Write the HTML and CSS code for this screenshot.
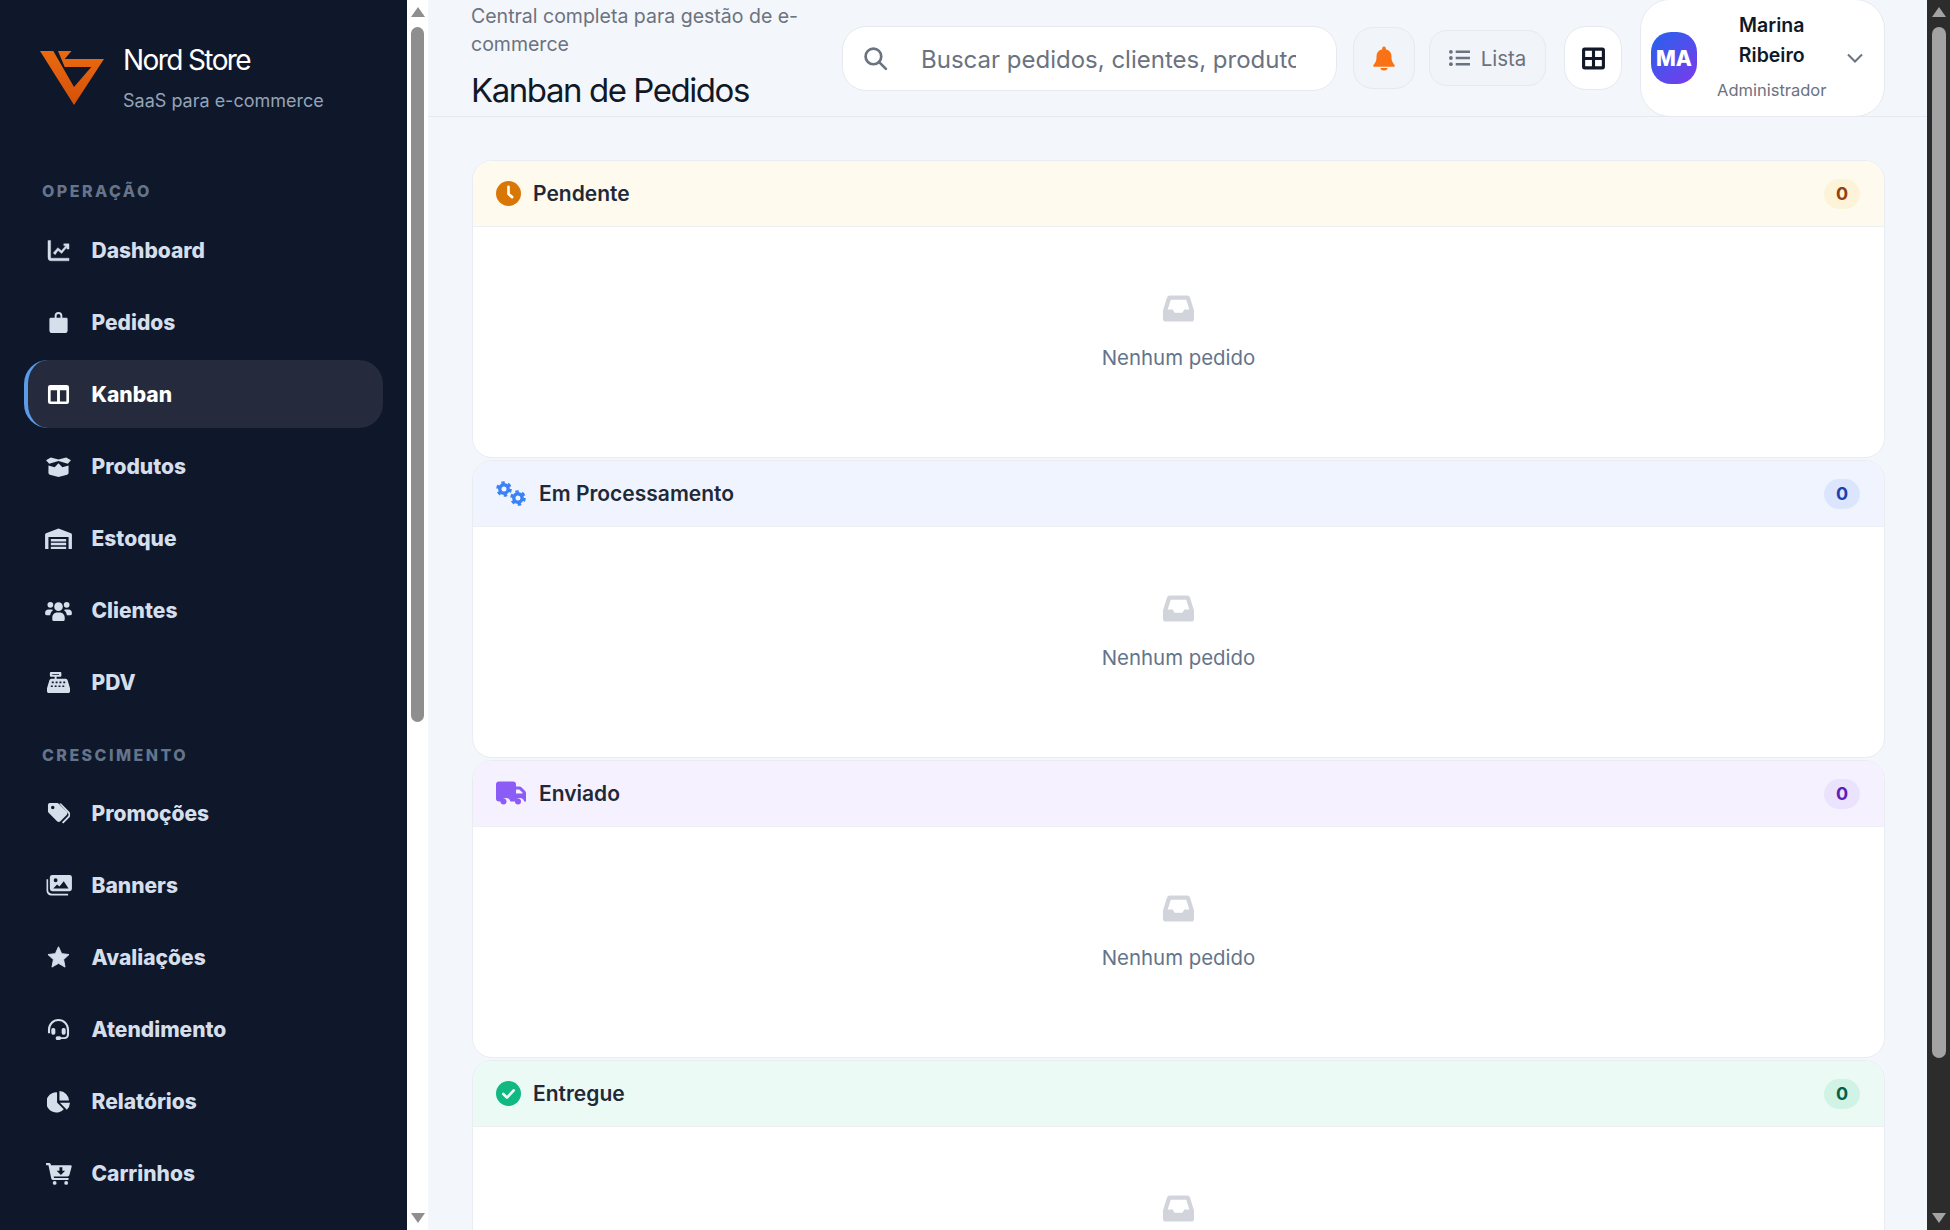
FILE: index.html
```html
<!DOCTYPE html>
<html lang="pt-BR">
<head>
    <meta charset="UTF-8">
    <title>Kanban de Pedidos</title>
    <link rel="stylesheet" href="styles.css">
</head>
<body>
    <!-- Sidebar -->
    <aside class="sidebar">
        <div class="brand">
            <svg class="brand-logo" viewBox="0 0 64 54">
                <defs>
                    <linearGradient id="logoFill" x1="0" y1="0" x2="0" y2="1">
                        <stop offset="0" stop-color="#ea6a10"/>
                        <stop offset="1" stop-color="#d4500a"/>
                    </linearGradient>
                </defs>
                <path fill="url(#logoFill)" d="M0 0H13.300L34 36 51.300 16H24.700L18 0H31.500L24.700 8H64L34 54Z"/>
            </svg>
            <div>
                <div class="brand-name">Nord Store</div>
                <div class="brand-sub">SaaS para e-commerce</div>
            </div>
        </div>

        <div class="nav-title first">OPERAÇÃO</div>
        <a class="nav-item"><svg class="nav-icon thick" viewBox="0 0 24 24"><path d="M1 1.500h2.800V19a1 1 0 0 0 1 1H23v2.800H4.500A3.500 3.500 0 0 1 1 19.300Z"/><path d="M6.500 14.500l4.800-5.500 3.800 3.200L19.500 7l-2-.1V5h5.500v5.500h-2.300V8.700l-5.400 6.500-3.800-3.200L8.500 16.500Z"/></svg>Dashboard</a>
        <a class="nav-item"><svg class="nav-icon" viewBox="0 0 24 24"><path fill-rule="evenodd" d="M8 7V5a4 4 0 0 1 8 0V7h4a1.500 1.500 0 0 1 1.500 1.500V20a3 3 0 0 1-3 3h-13a3 3 0 0 1-3-3V8.500A1.500 1.500 0 0 1 4 7Zm2 0h4V5a2 2 0 0 0-4 0Z"/></svg>Pedidos</a>
        <a class="nav-item active"><svg class="nav-icon" viewBox="0 0 24 24"><path fill-rule="evenodd" d="M3.500 2h17A2.500 2.500 0 0 1 23 4.500v15a2.500 2.500 0 0 1-2.500 2.500h-17A2.500 2.500 0 0 1 1 19.500v-15A2.500 2.500 0 0 1 3.500 2ZM3.800 7.500v11.700h6.700V7.500Zm9.700 0v11.700h6.700V7.500Z"/></svg>Kanban</a>
        <a class="nav-item"><svg class="nav-icon wide" viewBox="0 0 28 24"><path d="M1 5.500 6 2.500l8 2.300 8-2.300 5 3-3.300 3.700-9.700-3-9.700 3ZM3.500 11l6.500 1.800 4-4.300 4 4.300 6.500-1.800v7.500a2 2 0 0 1-1.500 2L14 23l-9-2.500a2 2 0 0 1-1.500-2Z"/></svg>Produtos</a>
        <a class="nav-item"><svg class="nav-icon wide" viewBox="0 0 28 24"><path fill-rule="evenodd" d="M14 1.500 27 6.500a1.500 1.500 0 0 1 1 1.400V23h-3.500V10.500h-21V23H0V7.900a1.500 1.500 0 0 1 1-1.400ZM6 12.500h16V15H6Zm0 4h16V19H6Zm0 4h16V23H6Z"/></svg>Estoque</a>
        <a class="nav-item"><svg class="nav-icon wide" viewBox="0 0 28 24"><circle cx="5.500" cy="6" r="3"/><circle cx="22.500" cy="6" r="3"/><circle cx="14" cy="8" r="4.500"/><path d="M0 14.500c0-2 1.500-3.500 3.500-3.500h3c.8 0 1.400.2 2 .6-1.800 1.200-3 3.200-3.200 5.400H2a2 2 0 0 1-2-2Zm28 0c0-2-1.500-3.500-3.500-3.500h-3c-.8 0-1.400.2-2 .6 1.800 1.200 3 3.200 3.200 5.400H26a2 2 0 0 0 2-2ZM7.500 19.500c0-3 2.300-5.300 5-5.300h3c2.700 0 5 2.300 5 5.300v1.800a1.700 1.700 0 0 1-1.700 1.700H9.200a1.700 1.700 0 0 1-1.700-1.700Z"/></svg>Clientes</a>
        <a class="nav-item"><svg class="nav-icon" viewBox="0 0 24 24"><path fill-rule="evenodd" d="M4 1h10a1 1 0 0 1 1 1v3a1 1 0 0 1-1 1h-4v2h9.500a2 2 0 0 1 2 1.600L24 18v3.500A1.500 1.500 0 0 1 22.500 23h-21A1.500 1.500 0 0 1 0 21.500V18l2.500-8.400A2 2 0 0 1 4.500 8H8V6H4a1 1 0 0 1-1-1V2a1 1 0 0 1 1-1Zm1.500 2v1h7V3ZM5 11v1.700h2V11Zm4 0v1.700h2V11Zm4 0v1.700h2V11Zm4 0v1.700h2V11ZM4 15v1.700h2V15Zm4 0v1.700h2V15Zm4 0v1.700h2V15Zm4 0v1.700h2V15Z"/></svg>PDV</a>

        <div class="nav-title">CRESCIMENTO</div>
        <a class="nav-item"><svg class="nav-icon" viewBox="0 0 24 24"><path fill-rule="evenodd" d="M1 3a2 2 0 0 1 2-2h7.500a2.500 2.500 0 0 1 1.800.700L20.500 10a2.500 2.500 0 0 1 0 3.500L14 20a2.500 2.500 0 0 1-3.500 0L1.700 11.300A2.500 2.500 0 0 1 1 9.500ZM6 7.500A1.800 1.800 0 1 0 6 3.900a1.800 1.800 0 0 0 0 3.600Z"/><path d="M14.500 1.300 23 10a4.500 4.500 0 0 1 0 6.400l-6 6-1.400-1.400 6-6a2.500 2.500 0 0 0 0-3.600L13 1.800Z"/></svg>Promoções</a>
        <a class="nav-item"><svg class="nav-icon wide" viewBox="0 0 28 24"><path fill-rule="evenodd" d="M7.500 1h18A2.500 2.500 0 0 1 28 3.500v12a2.500 2.500 0 0 1-2.500 2.500h-18A2.500 2.500 0 0 1 5 15.500v-12A2.500 2.500 0 0 1 7.500 1ZM11 4.500a2 2 0 1 0 0 4 2 2 0 0 0 0-4ZM8.500 15h16l-5-7.500-4.500 5.500-2.500-2Z"/><path d="M1.500 5.500h1.700v11a4 4 0 0 0 4 4H24V22.500H6.500a5 5 0 0 1-5-5Z"/></svg>Banners</a>
        <a class="nav-item"><svg class="nav-icon" viewBox="0 0 24 24"><path d="M12 .8l3.300 7.200 7.700.9-5.700 5.300 1.500 7.800L12 18.100 5.200 22l1.500-7.800L1 8.900 8.700 8Z" stroke-linejoin="round" stroke="currentColor"/></svg>Avaliações</a>
        <a class="nav-item"><svg class="nav-icon" viewBox="0 0 24 24"><path d="M12 1C5.900 1 1 5.900 1 12v4h2.200v-4a8.800 8.800 0 0 1 17.600 0v5.500a2.500 2.500 0 0 1-2.500 2.500h-3.600a2 2 0 0 0-1.700-1H11a2 2 0 0 0 0 4h2a2 2 0 0 0 1.700-1h3.600a4.700 4.700 0 0 0 4.700-4.700V12C23 5.900 18.100 1 12 1Z"/><rect x="4.500" y="10.500" width="4.200" height="7" rx="1.800"/><rect x="15.300" y="10.500" width="4.200" height="7" rx="1.800"/></svg>Atendimento</a>
        <a class="nav-item"><svg class="nav-icon" viewBox="0 0 24 24"><path d="M10.500 2.500V13l7 7a10.500 10.500 0 1 1-7-17.500Z"/><path d="M13 1a10.500 10.500 0 0 1 10 10H13Z"/><path d="M13.500 13.300H24a10.500 10.500 0 0 1-3.300 7.200Z"/></svg>Relatórios</a>
        <a class="nav-item"><svg class="nav-icon wide" viewBox="0 0 28 24"><path fill-rule="evenodd" d="M1 1h3.400a1.500 1.500 0 0 1 1.400 1l.4 1.500h20.300a1.200 1.200 0 0 1 1.200 1.500l-2.300 8.500a2 2 0 0 1-1.900 1.500H9l.4 1.800h15.100V18.800H8a1.500 1.500 0 0 1-1.500-1.200L3.500 3.300H1ZM15 5.500v3.500h-3l4.500 4.500L21 9h-3V5.500Z"/><circle cx="10" cy="21.800" r="2"/><circle cx="22" cy="21.800" r="2"/></svg>Carrinhos</a>
    </aside>

    <!-- Sidebar scrollbar -->
    <div class="side-scroll">
        <span class="arrow-up"></span>
        <span class="side-thumb"></span>
        <span class="arrow-down"></span>
    </div>

    <main class="main">
        <header class="topbar">
            <div class="page-head">
                <p class="page-sub">Central completa para gestão de e-commerce</p>
                <h1>Kanban de Pedidos</h1>
            </div>
            <div class="search-box">
                <svg class="search-icon" viewBox="0 0 24 24"><circle cx="10" cy="10" r="7.500"/><path d="M15.500 15.500 22 22"/></svg>
                <input type="text" placeholder="Buscar pedidos, clientes, produtos...">
            </div>
            <button class="bell-btn"><svg viewBox="0 0 22 24"><path d="M11 0a1.800 1.800 0 0 1 1.800 1.800v1A7.500 7.500 0 0 1 18.500 10v1.500c0 2.500 1 4.500 3 7a1 1 0 0 1-.8 1.700H1.300a1 1 0 0 1-.8-1.700c2-2.500 3-4.500 3-7V10A7.500 7.500 0 0 1 9.200 2.800v-1A1.800 1.800 0 0 1 11 0Z"/><path d="M7.500 21.500h7a3.500 2.500 0 0 1-7 0Z"/></svg></button>
            <button class="list-btn"><svg viewBox="0 0 22 18"><circle cx="2" cy="2.500" r="2"/><circle cx="2" cy="9" r="2"/><circle cx="2" cy="15.500" r="2"/><path d="M7 1.200h15v2.600H7Zm0 6.500h15v2.600H7Zm0 6.500h15v2.600H7Z"/></svg>Lista</button>
            <button class="grid-btn"><svg viewBox="0 0 24 24"><path fill-rule="evenodd" d="M3.500 1.500h17a2.500 2.500 0 0 1 2.500 2.500v16a2.500 2.500 0 0 1-2.500 2.500h-17A2.500 2.500 0 0 1 1 20V4a2.500 2.500 0 0 1 2.500-2.500ZM4 4.500v6h6.500v-6Zm9.500 0v6H20v-6ZM4 13.500v6h6.500v-6Zm9.500 0v6H20v-6Z"/></svg></button>
            <div class="user-card">
                <div class="avatar">MA</div>
                <div class="user-info">
                    <div class="user-name">Marina Ribeiro</div>
                    <div class="user-role">Administrador</div>
                </div>
                <svg class="chevron" viewBox="0 0 18 12"><path d="M2 2.500 9 9.500 16 2.500"/></svg>
            </div>
        </header>

        <div class="board">
            <section class="column pending">
                <div class="column-head">
                    <svg class="column-icon" viewBox="0 0 24 24"><circle cx="12" cy="12" r="12"/><path class="icon-cut" d="M12 5.500V12.500L15.500 15.500"/></svg>
                    <span class="column-title">Pendente</span>
                    <span class="count">0</span>
                </div>
                <div class="column-body">
                    <svg class="inbox" viewBox="0 0 32 27"><path fill-rule="evenodd" d="M7 0h18a3 3 0 0 1 2.800 2L32 15.500V24a3 3 0 0 1-3 3H3a3 3 0 0 1-3-3v-8.500L4.200 2A3 3 0 0 1 7 0Zm1 4.500L4.800 14.500H10l2 3.500h8l2-3.500h5.200L24 4.500Z"/></svg>
                    <p>Nenhum pedido</p>
                </div>
            </section>

            <section class="column processing">
                <div class="column-head">
                    <svg class="column-icon wide" viewBox="0 0 30 24">
                        <circle class="gear-body" cx="8" cy="7.500" r="4.200"/>
                        <circle class="gear-teeth" cx="8" cy="7.500" r="6.500"/>
                        <circle class="gear-body" cx="22" cy="16.500" r="4.200"/>
                        <circle class="gear-teeth" cx="22" cy="16.500" r="6.500"/>
                    </svg>
                    <span class="column-title">Em Processamento</span>
                    <span class="count">0</span>
                </div>
                <div class="column-body">
                    <svg class="inbox" viewBox="0 0 32 27"><path fill-rule="evenodd" d="M7 0h18a3 3 0 0 1 2.800 2L32 15.500V24a3 3 0 0 1-3 3H3a3 3 0 0 1-3-3v-8.500L4.200 2A3 3 0 0 1 7 0Zm1 4.500L4.800 14.500H10l2 3.500h8l2-3.500h5.200L24 4.500Z"/></svg>
                    <p>Nenhum pedido</p>
                </div>
            </section>

            <section class="column shipped">
                <div class="column-head">
                    <svg class="column-icon wide" viewBox="0 0 30 24"><path fill-rule="evenodd" d="M3 0h14a3 3 0 0 1 3 3v2h3.500a3 3 0 0 1 2.100.9l3.500 3.500a3 3 0 0 1 .9 2.100V17a1.500 1.500 0 0 1 0 3h-1.800a4.500 4.500 0 0 0-8.800 0h-5a4.500 4.500 0 0 0-8.800 0H3a3 3 0 0 1-3-3V3a3 3 0 0 1 3-3Zm17 8v4h6.500v-.9L23.200 8Z"/><circle cx="7.500" cy="20" r="3"/><circle cx="22" cy="20" r="3"/></svg>
                    <span class="column-title">Enviado</span>
                    <span class="count">0</span>
                </div>
                <div class="column-body">
                    <svg class="inbox" viewBox="0 0 32 27"><path fill-rule="evenodd" d="M7 0h18a3 3 0 0 1 2.800 2L32 15.500V24a3 3 0 0 1-3 3H3a3 3 0 0 1-3-3v-8.500L4.200 2A3 3 0 0 1 7 0Zm1 4.500L4.800 14.500H10l2 3.500h8l2-3.500h5.200L24 4.500Z"/></svg>
                    <p>Nenhum pedido</p>
                </div>
            </section>

            <section class="column delivered">
                <div class="column-head">
                    <svg class="column-icon" viewBox="0 0 24 24"><circle cx="12" cy="12" r="12"/><path class="icon-cut" d="M7 12.500 10.500 16 17 9"/></svg>
                    <span class="column-title">Entregue</span>
                    <span class="count">0</span>
                </div>
                <div class="column-body">
                    <svg class="inbox" viewBox="0 0 32 27"><path fill-rule="evenodd" d="M7 0h18a3 3 0 0 1 2.800 2L32 15.500V24a3 3 0 0 1-3 3H3a3 3 0 0 1-3-3v-8.500L4.200 2A3 3 0 0 1 7 0Zm1 4.500L4.800 14.500H10l2 3.500h8l2-3.500h5.200L24 4.500Z"/></svg>
                    <p>Nenhum pedido</p>
                </div>
            </section>
        </div>
    </main>

    <!-- Page scrollbar -->
    <div class="page-scroll">
        <span class="arrow-up"></span>
        <span class="page-thumb"></span>
        <span class="arrow-down"></span>
    </div>
</body>
</html>
```

FILE: styles.css
```css
* {
    box-sizing: border-box;
}
body {
    margin: 0;
    height: 1230px;
    overflow: hidden;
    display: flex;
    font-family: Inter, "Liberation Sans", sans-serif;
    background-color: #f3f6fa;
    color: #111827;
}

/* Sidebar */
.sidebar {
    width: 407px;
    height: 1230px;
    flex: none;
    overflow: hidden;
    background-color: #0f172a;
    padding: 0 24px;
}
.brand {
    display: flex;
    align-items: flex-start;
    height: 148px;
    padding: 43px 0 0 16px;
    gap: 19px;
}
.brand-logo {
    width: 64px;
    height: 54px;
    flex: none;
    margin-top: 8px;
}
.brand-name {
    font-size: 28px;
    font-weight: 400;
    letter-spacing: -1.6px;
    line-height: 34px;
    color: #fff;
}
.brand-sub {
    font-size: 18px;
    line-height: 24px;
    margin-top: 12px;
    color: #94a3b8;
}
.nav-title {
    font-size: 16px;
    font-weight: 800;
    letter-spacing: 2.45px;
    line-height: 20px;
    color: #64748b;
    padding-left: 18px;
    margin: 29px 0 14.5px;
}
.nav-title.first {
    margin-top: 33px;
    margin-bottom: 15px;
}
.nav-item {
    display: flex;
    align-items: center;
    height: 68px;
    margin-bottom: 4px;
    padding-left: 18.5px;
    border-left: 4px solid transparent;
    border-radius: 24px;
    font-size: 21px;
    font-weight: 800;
    color: #d5deeb;
}
.nav-item.active {
    background-color: #252b3d;
    border-left-color: #5b9be8;
    color: #fff;
}
.nav-icon {
    width: 23px;
    height: 23px;
    flex: none;
    margin-right: 22px;
    fill: currentColor;
}
.nav-icon.wide {
    width: 27px;
    margin-left: -2px;
    margin-right: 20px;
}
.nav-icon.thick {
    stroke: currentColor;
    stroke-width: 0.4;
}

/* Scrollbars */
.side-scroll {
    width: 21px;
    flex: none;
    background-color: #fff;
    display: flex;
    flex-direction: column;
    padding: 7px 4px 0;
}
.page-scroll {
    width: 23px;
    flex: none;
    background-color: #2c2c2c;
    display: flex;
    flex-direction: column;
    padding: 7px 4px 0 5px;
}
.arrow-up, .arrow-down {
    width: 0;
    height: 0;
    flex: none;
    border-left: 7px solid transparent;
    border-right: 7px solid transparent;
}
.arrow-up {
    border-bottom: 10px solid #8e8e8e;
}
.arrow-down {
    border-top: 10px solid #8e8e8e;
}
.side-thumb {
    height: 695px;
    margin: 10px 0 491px;
    border-radius: 7px;
    background-color: #8e8e8e;
}
.page-thumb {
    height: 1031px;
    margin: 10px 0 155px;
    border-radius: 7px;
    background-color: #a3a3a3;
}
.page-scroll .arrow-up, .page-scroll .arrow-down {
    border-bottom-color: #a3a3a3;
    border-top-color: #a3a3a3;
}

/* Topbar */
.main {
    flex: 1;
    min-width: 0;
    height: 1230px;
    overflow: hidden;
}
.topbar {
    display: flex;
    align-items: center;
    height: 117px;
    padding: 0 42px 0 44px;
    border-bottom: 1px solid #e6eaf0;
}
.page-head {
    width: 370px;
    flex: none;
    align-self: flex-start;
    margin-top: 3px;
}
.page-sub {
    margin: 0 0 0 -1px;
    font-size: 19.5px;
    line-height: 27.5px;
    color: #6b7280;
}
h1 {
    margin: 11px 0 0 -1px;
    font-size: 33px;
    font-weight: 400;
    line-height: 42px;
    letter-spacing: -1.45px;
    color: #111827;
}
.search-box {
    width: 495px;
    height: 65px;
    flex: none;
    display: flex;
    align-items: center;
    margin-right: 16px;
    padding-left: 20px;
    background-color: #fff;
    border: 1px solid #e6eaf0;
    border-radius: 24px;
}
.search-icon {
    width: 25px;
    height: 25px;
    flex: none;
    margin-right: 33px;
    fill: none;
    stroke: #6b7280;
    stroke-width: 2.6;
    stroke-linecap: round;
}
.search-box input {
    width: 375px;
    border: none;
    outline: none;
    padding: 2px 0 0;
    background: transparent;
    font-family: inherit;
    font-size: 24px;
    color: #111827;
}
.search-box input::placeholder {
    color: #6b7280;
    opacity: 1;
}
button {
    font-family: inherit;
    padding: 0;
    flex: none;
}
.bell-btn {
    width: 62px;
    height: 62px;
    margin-right: 14px;
    background-color: #f1f5f9;
    border: 1px solid #e6eaf0;
    border-radius: 20px;
}
.bell-btn svg {
    width: 22px;
    height: 25px;
    fill: #f97316;
    vertical-align: middle;
}
.list-btn {
    width: 117px;
    height: 56px;
    margin-right: 18px;
    display: flex;
    align-items: center;
    justify-content: center;
    gap: 11px;
    background-color: #f1f5f9;
    border: 1px solid #e6eaf0;
    border-radius: 18px;
    font-size: 20.5px;
    color: #6b7280;
}
.list-btn svg {
    width: 21px;
    height: 18px;
    fill: #6b7280;
}
.grid-btn {
    width: 58px;
    height: 64px;
    margin-right: 18px;
    background-color: #fff;
    border: 1px solid #e6eaf0;
    border-radius: 22px;
}
.grid-btn svg {
    width: 25px;
    height: 25px;
    fill: #111827;
    vertical-align: middle;
}
.user-card {
    width: 245px;
    height: 118px;
    flex: none;
    display: flex;
    align-items: center;
    padding: 0 25px 0 10px;
    background-color: #fff;
    border: 1px solid #e6eaf0;
    border-radius: 30px;
}
.avatar {
    width: 46px;
    height: 52px;
    flex: none;
    display: flex;
    align-items: center;
    justify-content: center;
    border-radius: 20px;
    background: linear-gradient(135deg, #2563eb, #7c3aed);
    color: #fff;
    font-size: 21px;
    font-weight: 800;
}
.user-info {
    flex: 1;
    padding: 0 20px;
    text-align: center;
}
.user-name {
    font-size: 19.5px;
    font-weight: 600;
    line-height: 30px;
    margin-top: -5px;
    color: #111827;
}
.user-role {
    font-size: 16.5px;
    line-height: 24px;
    margin-top: 8px;
    color: #6b7280;
}
.chevron {
    width: 18px;
    height: 12px;
    flex: none;
    fill: none;
    stroke: #6b7280;
    stroke-width: 2;
}

/* Board */
.board {
    padding: 43px 42px 0 44px;
}
.column {
    height: 298px;
    margin-bottom: 2px;
    border: 1px solid #e9edf2;
    border-radius: 20px;
    background-color: #fff;
    overflow: hidden;
}
.column-head {
    display: flex;
    align-items: center;
    height: 66px;
    padding: 0 24px 0 23px;
    border-bottom: 1px solid #eef0f4;
}
.column-icon {
    width: 25px;
    height: 25px;
    flex: none;
    margin-right: 12px;
}
.column-icon.wide {
    width: 30px;
    margin-right: 13px;
}
.icon-cut {
    fill: none;
    stroke-width: 2.6;
    stroke-linecap: round;
    stroke-linejoin: round;
}
.gear-body {
    fill: none;
    stroke: #3b82f6;
    stroke-width: 3.4;
}
.gear-teeth {
    fill: none;
    stroke: #3b82f6;
    stroke-width: 2.6;
    stroke-dasharray: 3.4 3.4;
}
.column-title {
    flex: 1;
    font-size: 21px;
    font-weight: 600;
    color: #1f2937;
}
.count {
    width: 36px;
    height: 30px;
    display: flex;
    align-items: center;
    justify-content: center;
    border-radius: 15px;
    font-size: 18px;
    font-weight: 700;
}
.column-body {
    height: 229px;
    padding-top: 68px;
    text-align: center;
}
.column-body p {
    margin: 23px 0 0;
    font-size: 20.4px;
    line-height: 26px;
    color: #64748b;
}
.inbox {
    display: block;
    width: 31px;
    height: 27px;
    margin: 0 auto;
    fill: #d1d5db;
}
.pending .column-head { background-color: #fffaee; }
.pending .column-icon { fill: #d97706; }
.pending .icon-cut { stroke: #fffaee; }
.pending .count { background-color: #fcf3d9; color: #92400e; }
.processing .column-head { background-color: #eff4fe; }
.processing .count { background-color: #dbe6fe; color: #1e40af; }
.shipped .column-head { background-color: #f6f1ff; }
.shipped .column-icon { fill: #8b5cf6; }
.shipped .count { background-color: #ebe2fe; color: #5b21b6; }
.delivered .column-head { background-color: #ecfaf6; }
.delivered .column-icon { fill: #10b981; }
.delivered .icon-cut { stroke: #ecfaf6; }
.delivered .count { background-color: #d1f3e5; color: #065f46; }
```
